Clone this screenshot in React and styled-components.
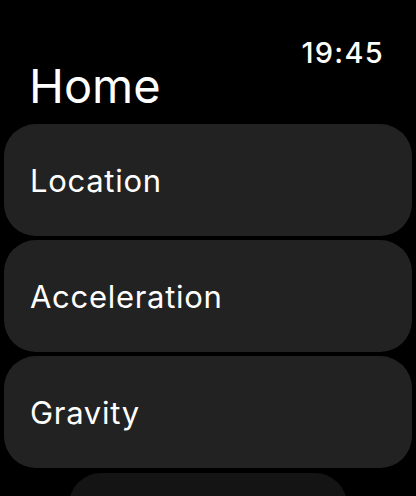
import React from 'react';
import styled, { createGlobalStyle } from 'styled-components';

const GlobalStyle = createGlobalStyle`
  html, body {
    margin: 0;
    padding: 0;
    background: #000;
    overflow: hidden;
  }
  body {
    font-family: Inter, "Noto Sans", "Liberation Sans", sans-serif;
    color: #fff;
  }
`;

const Screen = styled.div`
  width: 416px;
  height: 496px;
  background: #000;
  display: flex;
  flex-direction: column;
  padding: 0 4px;
  box-sizing: border-box;
  overflow: hidden;
`;

const StatusBar = styled.div`
  display: flex;
  justify-content: flex-end;
  padding: 37px 28px 0 0;
`;

const Time = styled.span`
  font-size: 29px;
  line-height: 32px;
  font-weight: 500;
  letter-spacing: 1.3px;
`;

const Title = styled.h1`
  margin: -11px 0 0;
  padding-left: 25px;
  font-size: 47px;
  line-height: 56px;
  font-weight: 400;
`;

const List = styled.div`
  display: flex;
  flex-direction: column;
  gap: 4px;
  margin-top: 10px;
`;

const Row = styled.div`
  height: 112px;
  flex-shrink: 0;
  border-radius: 32px;
  background: ${({ $dim }) => ($dim ? '#141414' : '#222222')};
  margin: ${({ $dim }) => ($dim ? '1px 65px 0' : '0')};
  display: flex;
  align-items: center;
  padding-left: 26px;
`;

const Label = styled.span`
  font-size: 31px;
  letter-spacing: 0.7px;
`;

const items = ['Location', 'Acceleration', 'Gravity'];

export default function App() {
  return (
    <>
      <GlobalStyle />
      <Screen>
        <StatusBar>
          <Time>19:45</Time>
        </StatusBar>
        <Title>Home</Title>
        <List>
          {items.map((item) => (
            <Row key={item}>
              <Label>{item}</Label>
            </Row>
          ))}
          <Row $dim />
        </List>
      </Screen>
    </>
  );
}
